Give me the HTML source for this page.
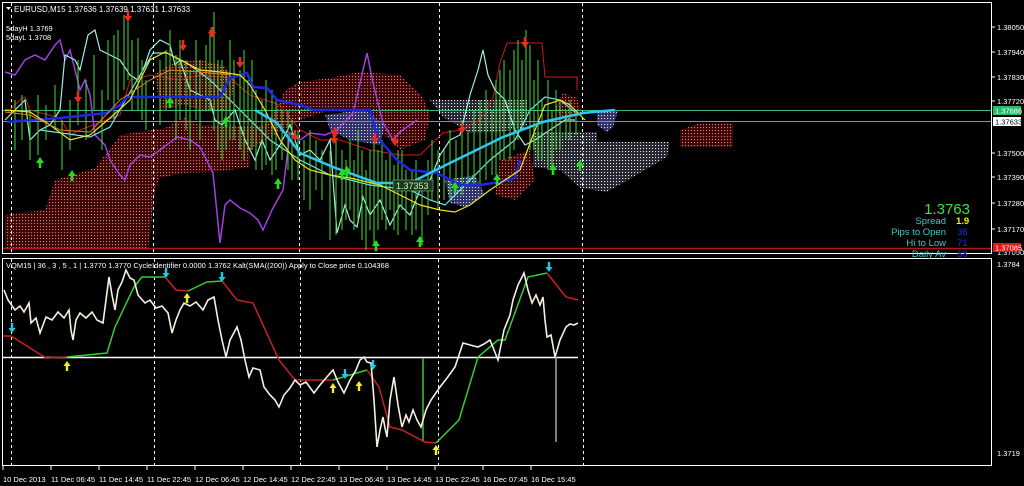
<!DOCTYPE html>
<html><head><meta charset="utf-8"><style>
html,body{margin:0;padding:0;background:#000;width:1024px;height:486px;overflow:hidden}
svg{display:block;font-family:"Liberation Sans",sans-serif}
</style></head><body>
<svg width="1024" height="486" viewBox="0 0 1024 486" xmlns="http://www.w3.org/2000/svg">
<defs>
<pattern id="rd" width="3" height="3" patternUnits="userSpaceOnUse"><rect width="3" height="3" fill="#3a0606"/><rect x="1" y="1" width="1.1" height="1.1" fill="#e07a7a"/></pattern>
<pattern id="wd" width="3" height="3" patternUnits="userSpaceOnUse"><rect width="3" height="3" fill="#252530"/><rect x="1" y="1" width="1.1" height="1.1" fill="#e8e8e8"/></pattern>
<pattern id="bd" width="3" height="3" patternUnits="userSpaceOnUse"><rect width="3" height="3" fill="#30306a"/><rect x="1" y="1" width="1.1" height="1.1" fill="#ddd"/></pattern>
<g id="ua"><path d="M0,-6 L-4,0 L-1.3,0 L-1.3,5 L1.3,5 L1.3,0 L4,0 Z" fill="#22dd22"/></g>
<g id="da"><path d="M0,6 L-4,0 L-1.3,0 L-1.3,-5 L1.3,-5 L1.3,0 L4,0 Z" fill="#ee2a1a"/></g>
<g id="ca"><path d="M0,5 L-3.5,0 L-1.2,0 L-1.2,-5 L1.2,-5 L1.2,0 L3.5,0 Z" fill="#22c8e8"/></g>
<g id="ya"><path d="M0,-5 L-3.5,0 L-1.2,0 L-1.2,5 L1.2,5 L1.2,0 L3.5,0 Z" fill="#f0f020"/></g>
</defs>
<rect x="2.5" y="2.5" width="989" height="251" fill="none" stroke="#fff" stroke-width="1"/>
<rect x="2.5" y="258.5" width="989" height="207" fill="none" stroke="#fff" stroke-width="1"/>
<!-- clouds -->
<path d="M5,215 L45,210 L55,180 L95,168 L120,135 L165,128 L185,118 L200,125 L230,125 L250,127 L250,167 L215,172 L183,173 L160,178 L155,190 L148,250 L5,250 Z" fill="url(#rd)"/>
<path d="M155,73 L175,62 L200,60 L225,66 L235,80 L230,110 L205,112 L185,105 L160,110 Z" fill="url(#rd)"/>
<path d="M250,125 L265,125 L275,110 L285,90 L300,82 L330,78 L360,72 L400,75 L423,97 L430,115 L425,140 L400,150 L390,140 L357,115 L330,110 L300,120 L283,130 L265,140 L250,150 Z" fill="url(#rd)"/>
<path d="M325,115 L365,110 L385,125 L380,145 L350,140 L330,130 Z" fill="url(#bd)"/>
<path d="M430,100 L527,100 L527,127 L500,132 L470,133 L443,117 Z" fill="url(#wd)"/>
<path d="M533,132 L597,132 L597,142 L670,142 L667,157 L633,177 L607,192 L580,188 L560,170 L533,167 Z" fill="url(#wd)"/>
<path d="M597,110 L618,110 L613,127 L607,132 L597,125 Z" fill="url(#bd)"/>
<path d="M680,130 L697,124 L733,123 L733,147 L680,147 Z" fill="url(#rd)"/>
<path d="M563,93 L577,98 L582,115 L565,120 L555,108 Z" fill="url(#rd)"/>
<path d="M500,160 L530,150 L535,180 L515,200 L495,195 Z" fill="url(#rd)"/>
<path d="M445,180 L475,175 L485,195 L465,207 L450,203 Z" fill="url(#bd)"/>
<!-- grid dashed -->
<g stroke="#fff" stroke-width="1" stroke-dasharray="3,3">
<line x1="11.5" y1="3" x2="11.5" y2="253"/><line x1="153.5" y1="3" x2="153.5" y2="253"/><line x1="299.5" y1="3" x2="299.5" y2="253"/><line x1="439.5" y1="3" x2="439.5" y2="253"/><line x1="582.5" y1="3" x2="582.5" y2="253"/>
<line x1="11.5" y1="259" x2="11.5" y2="465"/><line x1="154.5" y1="259" x2="154.5" y2="465"/><line x1="300.5" y1="259" x2="300.5" y2="465"/><line x1="438.5" y1="259" x2="438.5" y2="465"/><line x1="583.5" y1="259" x2="583.5" y2="465"/>
</g>
<line x1="3" y1="110.5" x2="991" y2="110.5" stroke="#3cb878"/>
<line x1="3" y1="121.5" x2="991" y2="121.5" stroke="#8a8aa0"/>
<line x1="3" y1="248.5" x2="991" y2="248.5" stroke="#b01818" stroke-width="1.5"/>
<!-- red step line -->
<polyline fill="none" stroke="#d01818" stroke-width="1" points="8,112 20,100 25,97 30,110 60,118 70,135 80,130 120,115 130,80 140,78 150,75 180,80 200,75 230,78 250,95 280,105 300,130 320,140 340,140 370,150 400,155 420,155 443,133 460,130 480,120 493,98 500,63 507,43 542,43 545,77 577,77 577,90"/>
<!-- purple -->
<polyline fill="none" stroke="#a040e0" stroke-width="1.5" points="5,72 15,75 25,60 35,55 45,60 55,45 60,40 65,60 70,50 75,70 80,90 85,80 90,95 95,135 105,145 110,160 120,175 125,180 130,165 140,155 150,157 160,150 177,137 190,140 200,147 213,173 220,243 225,205 230,200 240,208 250,213 258,220 263,230 272,210 283,190 290,133 300,140 310,133 325,135 337,130 353,113 363,70 367,53 373,83 383,123 393,140 400,132 407,127 417,120"/>
<!-- light cyan -->
<polyline fill="none" stroke="#9ff0e0" stroke-width="1.2" points="5,120 15,110 25,100 30,140 40,130 50,125 60,110 65,55 75,60 80,70 88,35 95,30 100,50 110,55 120,60 130,75 138,80 145,65 150,50 160,40 170,45 175,65 180,60 190,90 200,95 210,100 215,120 222,125 235,110 245,140 255,160 262,140 270,160 280,145 290,125 300,155 310,150 320,160 330,140 337,233 345,205 350,220 357,227 363,197 370,215 380,200 390,225 400,205 410,215 420,190 430,180 440,155 450,140 460,135 470,95 478,70 483,50 488,75 495,90 505,100 515,130 525,145 535,140 550,130 565,120 575,120"/>
<!-- light cyan smooth curve -->
<polyline fill="none" stroke="#70e8f0" stroke-width="1.2" points="40,130 90,137 110,127 133,87 153,53 167,53 187,63 210,80 240,110 270,140 300,160 330,175 370,185 410,190 430,200 445,205 460,190 490,160 515,140 530,110 545,97 560,100 575,112"/>
<!-- green bars -->
<g stroke="#44dd33" stroke-width="1">
<path d="M15,100V150M22,95V140M30,110V160M38,95V155M46,105V140M55,85V130M62,120V170M70,100V150M78,60V125M86,80V140M94,55V110M102,90V150M108,40V100M114,35V120M118,30V100M124,15V90M128,10V80M132,40V110M138,38V110M142,60V120M146,80V130M160,60V125M166,50V110M170,30V100M176,55V140M180,40V120M186,60V130M190,70V150M196,40V120M200,60V140M206,45V110M210,30V110M214,12V130M218,60V150M222,60V160M226,70V150M230,40V140M234,60V140M240,70V150M244,50V160M248,80V150M252,60V150M256,90V170M262,100V170M266,80V165M272,90V175M276,100V170M282,110V160M288,110V170M292,120V180M298,130V180M304,140V200M310,130V210M316,140V190M322,150V200"/>
<path d="M330,150V240M336,140V235M342,150V230M346,160V220M350,140V210M354,160V230M358,130V220M362,150V240M366,170V250M370,150V230M374,140V245M378,150V230M382,140V220M386,160V230M390,150V210M394,165V230M398,150V235M402,150V210M406,170V230M412,170V235M416,160V230M422,180V245M428,160V215M432,140V200M438,150V210M444,150V200M450,130V200M456,140V190M462,120V195M468,130V185M474,110V185M480,100V185M486,90V180M492,110V175M496,80V175M500,70V160M504,60V160M510,70V160M514,50V150M518,40V140M522,60V130M526,30V120M530,45V150M534,80V150M538,60V160M542,100V160M548,80V170M552,110V170M556,90V150M560,100V150M566,110V140M570,100V140M576,110V135"/>
</g>
<!-- blue -->
<polyline fill="none" stroke="#1a2ae0" stroke-width="2.5" points="7,122 60,118 107,113 120,105 127,97 220,97 230,78 247,73 253,87 267,88 277,100 300,105 313,110 370,110 377,137 397,160 410,170 437,173 460,185 480,185 500,182 515,178 520,160"/>
<!-- yellow -->
<polyline fill="none" stroke="#f0e020" stroke-width="1.2" points="5,110 30,112 50,125 70,140 90,135 110,118 130,100 150,60 165,52 180,60 200,70 220,72 240,75 250,85 265,110 280,140 295,160 310,170 330,175 350,178 380,185 400,195 420,205 440,210 455,212 470,205 490,190 520,170 535,130 545,105 560,100 570,105 585,120"/>
<!-- orange -->
<polyline fill="none" stroke="#e08020" stroke-width="1" points="5,112 30,115 60,130 90,132 120,100 150,80 170,70 200,72 230,75"/>
<!-- cyan thick -->
<polyline fill="none" stroke="#30c8f0" stroke-width="2.5" points="255,110 277,123 300,153 333,167 377,183 410,183 450,163 503,137 543,122 583,113 615,110"/>
<rect x="393" y="180" width="40" height="11" fill="#1a3a1a" stroke="#8ab88a" stroke-width="0.6"/>
<text x="396" y="189" font-size="9" fill="#c8f0c8">1.37353</text>
<!-- arrows -->
<use href="#da" x="128" y="16"/><use href="#da" x="212" y="32"/><use href="#da" x="240" y="62"/><use href="#da" x="78" y="97"/><use href="#da" x="183" y="45"/><use href="#da" x="335" y="132"/><use href="#da" x="395" y="140"/><use href="#da" x="462" y="128"/><use href="#da" x="525" y="42"/><use href="#da" x="295" y="135"/><use href="#da" x="334" y="138"/><use href="#da" x="375" y="138"/>
<use href="#ua" x="40" y="163"/><use href="#ua" x="72" y="176"/><use href="#ua" x="170" y="103"/><use href="#ua" x="226" y="122"/><use href="#ua" x="278" y="184"/><use href="#ua" x="347" y="172"/><use href="#ua" x="376" y="246"/><use href="#ua" x="420" y="242"/><use href="#ua" x="497" y="180"/><use href="#ua" x="553" y="170"/><use href="#ua" x="580" y="166"/><use href="#ua" x="342" y="175"/><use href="#ua" x="455" y="188"/>
<!-- texts -->
<path d="M6,7 L11,7 L8.5,10 Z" fill="#fff"/>
<text x="14" y="12" font-size="8" fill="#fff">EURUSD,M15  1.37636 1.37639 1.37631 1.37633</text>
<text x="6" y="31" font-size="7.5" fill="#fff">5dayH 1.3769</text>
<text x="6" y="40" font-size="7.5" fill="#fff">5dayL 1.3708</text>
<text x="970" y="214" font-size="15" fill="#3ee03e" text-anchor="end">1.3763</text>
<text x="946" y="224" font-size="9.5" fill="#44c8c8" text-anchor="end">Spread</text><text x="956" y="224" font-size="9.5" fill="#f0f020" font-weight="bold">1.9</text>
<text x="946" y="235" font-size="9.5" fill="#44c8c8" text-anchor="end">Pips to Open</text><text x="957" y="235" font-size="9.5" fill="#2030e0">36</text>
<text x="946" y="246" font-size="9.5" fill="#44c8c8" text-anchor="end">Hi to Low</text><text x="957" y="246" font-size="9.5" fill="#2030e0">71</text>
<text x="946" y="257" font-size="9.5" fill="#44c8c8" text-anchor="end">Daily Av</text><text x="957" y="257" font-size="9.5" fill="#2030e0">68</text>
<g font-size="7.5" fill="#fff">
<text x="997" y="30">1.38050</text><text x="997" y="55">1.37940</text><text x="997" y="80">1.37830</text><text x="997" y="104">1.37720</text><text x="997" y="156">1.37500</text><text x="997" y="180">1.37390</text><text x="997" y="206">1.37280</text><text x="997" y="232">1.37170</text><text x="997" y="255">1.37050</text>
<text x="997" y="267">1.3784</text><text x="997" y="456">1.3719</text>
</g>
<g stroke="#fff"><line x1="992" y1="27" x2="995" y2="27"/><line x1="992" y1="52" x2="995" y2="52"/><line x1="992" y1="77" x2="995" y2="77"/><line x1="992" y1="101" x2="995" y2="101"/><line x1="992" y1="153" x2="995" y2="153"/><line x1="992" y1="177" x2="995" y2="177"/><line x1="992" y1="203" x2="995" y2="203"/><line x1="992" y1="229" x2="995" y2="229"/></g>
<rect x="993" y="106" width="28" height="9" fill="#22bb66"/><text x="995" y="113.5" font-size="7.5" fill="#fff">1.37686</text>
<rect x="993" y="117" width="28" height="9" fill="#fff"/><text x="995" y="124.5" font-size="7.5" fill="#000">1.37633</text>
<rect x="993" y="243" width="28" height="9" fill="#e01818"/><text x="995" y="250.5" font-size="7.5" fill="#fff">1.37085</text>
<!-- lower panel -->
<text x="6" y="268" font-size="7.5" fill="#fff">VQM15 | 36 , 3 , 5 , 1 | 1.3770 1.3770  CycleIdentifier 0.0000 1.3762  Kalt(SMA((200)) Apply to Close price 0.104368</text>
<line x1="3" y1="357.5" x2="578" y2="357.5" stroke="#fff" stroke-width="1.5"/>
<line x1="423" y1="358" x2="423" y2="442" stroke="#33cc33" stroke-width="1.5"/>
<line x1="556" y1="357" x2="556" y2="442" stroke="#aaa" stroke-width="1.5"/>
<polyline fill="none" stroke="#cc2020" stroke-width="1.5" points="3,336 11,336 46,358 67,357"/>
<polyline fill="none" stroke="#33cc33" stroke-width="1.5" points="67,357 107,353 115,327 134,287 142,277 165,277"/>
<polyline fill="none" stroke="#cc2020" stroke-width="1.5" points="165,277 176,290 188,291"/>
<polyline fill="none" stroke="#33cc33" stroke-width="1.5" points="188,291 207,282 222,281"/>
<polyline fill="none" stroke="#cc2020" stroke-width="1.5" points="222,281 237,300 253,303 279,360 295,380 333,380"/>
<polyline fill="none" stroke="#33cc33" stroke-width="1.5" points="333,380 367,370"/>
<polyline fill="none" stroke="#cc2020" stroke-width="1.5" points="367,370 379,387 390,427 402,430 425,442 436,443"/>
<polyline fill="none" stroke="#33cc33" stroke-width="1.5" points="436,443 459,420 478,357 498,340 505,340 528,277 547,273"/>
<polyline fill="none" stroke="#cc2020" stroke-width="1.5" points="547,273 566,297 578,300"/>
<polyline fill="none" stroke="#f5efe0" stroke-width="1.6" points="4,290 8,300 15,310 20,306 24,312 29,303 31,323 36,318 40,333 46,317 52,320 58,312 64,318 69,310 71,330 73,340 76,320 80,313 86,318 92,312 97,320 103,323 106,300 109,277 112,295 115,310 118,290 122,282 126,270 130,278 134,280 138,295 145,303 150,300 156,308 162,306 168,313 172,333 176,320 180,310 184,303 190,306 196,302 203,310 208,300 214,297 218,320 222,340 226,357 230,340 237,327 241,340 245,360 249,377 253,368 260,370 264,387 270,395 275,400 279,407 284,395 290,388 295,380 300,385 306,382 314,393 320,385 326,378 333,370 338,382 344,393 350,380 356,370 360,360 364,357 367,362 371,363 374,400 377,447 380,430 383,417 385,428 387,437 390,400 394,377 398,405 402,427 406,415 409,422 413,410 417,420 421,427 426,410 431,400 440,387 447,378 455,367 460,352 463,343 470,345 478,347 484,344 490,340 494,350 498,360 504,330 510,315 513,300 518,285 524,273 528,290 532,303 536,295 540,305 543,297 545,320 547,337 551,335 555,357 560,340 566,327 570,324 574,325 578,323"/>
<use href="#ca" x="12" y="328"/><use href="#ca" x="166" y="273"/><use href="#ca" x="222" y="277"/><use href="#ca" x="345" y="374"/><use href="#ca" x="373" y="365"/><use href="#ca" x="549" y="267"/>
<use href="#ya" x="67" y="366"/><use href="#ya" x="187" y="298"/><use href="#ya" x="333" y="388"/><use href="#ya" x="359" y="386"/><use href="#ya" x="436" y="450"/>
<g font-size="7.5" fill="#fff">
<text x="3" y="482">10 Dec 2013</text><text x="51" y="482">11 Dec 06:45</text><text x="99" y="482">11 Dec 14:45</text><text x="147" y="482">11 Dec 22:45</text><text x="195" y="482">12 Dec 06:45</text><text x="243" y="482">12 Dec 14:45</text><text x="291" y="482">12 Dec 22:45</text><text x="339" y="482">13 Dec 06:45</text><text x="387" y="482">13 Dec 14:45</text><text x="435" y="482">13 Dec 22:45</text><text x="483" y="482">16 Dec 07:45</text><text x="531" y="482">16 Dec 15:45</text>
</g>
<g stroke="#fff"><line x1="3" y1="466" x2="3" y2="470"/><line x1="51" y1="466" x2="51" y2="470"/><line x1="99" y1="466" x2="99" y2="470"/><line x1="147" y1="466" x2="147" y2="470"/><line x1="195" y1="466" x2="195" y2="470"/><line x1="243" y1="466" x2="243" y2="470"/><line x1="291" y1="466" x2="291" y2="470"/><line x1="339" y1="466" x2="339" y2="470"/><line x1="387" y1="466" x2="387" y2="470"/><line x1="435" y1="466" x2="435" y2="470"/><line x1="483" y1="466" x2="483" y2="470"/><line x1="531" y1="466" x2="531" y2="470"/></g>
</svg>
</body></html>
